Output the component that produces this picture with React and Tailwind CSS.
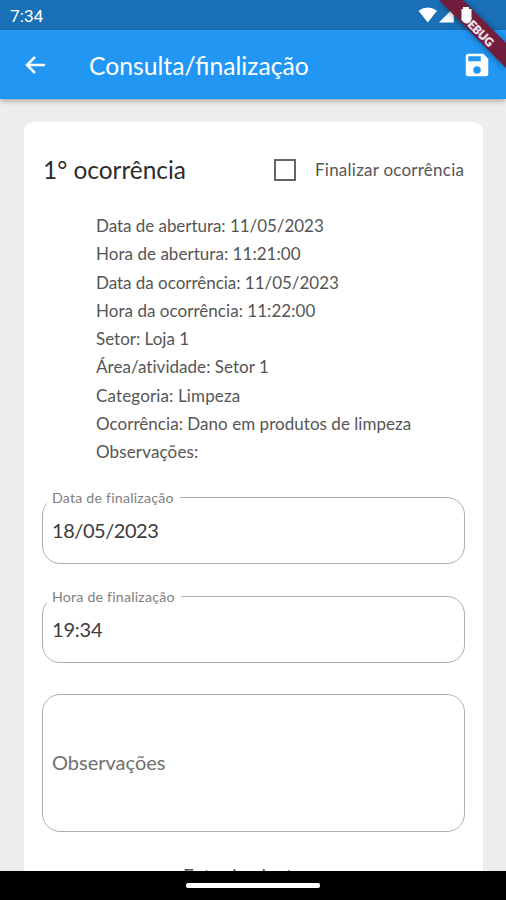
const details = [
  ["Data de abertura: 11/05/2023", "tracking-[-0.04px]"],
  ["Hora de abertura: 11:21:00", "tracking-[0.04px]"],
  ["Data da ocorrência: 11/05/2023", "tracking-[-0.02px]"],
  ["Hora da ocorrência: 11:22:00", "tracking-[0.04px]"],
  ["Setor: Loja 1", "tracking-normal"],
  ["Área/atividade: Setor 1", "tracking-[0.04px]"],
  ["Categoria: Limpeza", "tracking-[0.14px]"],
  ["Ocorrência: Dano em produtos de limpeza", "tracking-[0.04px]"],
  ["Observações:", "tracking-[0.14px]"],
];

function Field({ label, value, valueTracking }) {
  return (
    <fieldset className="ml-[18px] h-[74px] w-[423px] rounded-[18px] border border-[#b0b0b0] pl-[4px]">
      <legend className="h-[16px] pl-[5px] pr-[6px] text-[14.2px] leading-[16px] tracking-[0.2px] whitespace-nowrap text-[#808080]">{label}</legend>
      <div className={`pl-[5px] pt-[10px] text-[20px] leading-[28px] text-[#3c3c3c] ${valueTracking}`}>{value}</div>
    </fieldset>
  );
}

export default function App() {
  return (
    <div className="relative flex h-[900px] w-[506px] flex-col overflow-hidden bg-[#ededed] font-['Lato',sans-serif]">
      <div className="flex h-[30px] shrink-0 items-center justify-between bg-[#1a70b7] pl-[10px] text-white">
        <span className="pt-[2px] font-['Roboto',sans-serif] text-[17.3px] leading-[30px]">7:34</span>
        <svg width="94" height="30" viewBox="412 0 94 30" fill="white">
          <path d="M418.5 10.8Q427.8 4.2 437 10.8L427.8 22.6Z" />
          <path d="M439 22.6H453.8V7.5Z" />
        </svg>
      </div>
      <header className="z-10 flex h-[69px] shrink-0 items-center bg-[#2196f3] px-[22px] text-white shadow-[0_2px_5px_rgba(0,0,0,0.3)]">
        <svg width="26" height="28" viewBox="0 0 24 24" fill="white" stroke="white" strokeWidth="0.4">
          <path d="M21 11H7.1l5.5-5.6L11.2 4 3.2 12l8 8 1.4-1.4L7.1 13H21z" />
        </svg>
        <h1 className="ml-[41px] flex-1 pt-[2px] text-[24.7px] leading-[34px] whitespace-nowrap">Consulta/finalização</h1>
        <svg className="-mr-[8px] shrink-0" width="30" height="30" viewBox="0 0 24 24" fill="white">
          <path fillRule="evenodd" d="M17 3H5a2 2 0 0 0-2 2v14a2 2 0 0 0 2 2h14a2 2 0 0 0 2-2V7zM12 19a3 3 0 1 1 0-6 3 3 0 0 1 0 6zM15 9H5V5h10z" />
        </svg>
      </header>
      <main className="ml-[24px] mt-[23px] h-[749px] w-[459px] shrink-0 overflow-hidden rounded-t-[9px] bg-white">
        <div className="mt-[31px] flex h-[34px] items-center pl-[19px]">
          <h2 className="w-[231px] text-[24.4px] whitespace-nowrap text-[#2c2c2c]">1° ocorrência</h2>
          <div className="size-[22px] shrink-0 border-2 border-[#666]" />
          <span className="ml-[19px] text-[17px] tracking-[0.24px] whitespace-nowrap text-[#555]">Finalizar ocorrência</span>
        </div>
        <div className="mt-[25px] pl-[72px] text-[17px] leading-[28.3px] text-[#555]">
          {details.map(([text, tracking]) => <p key={text} className={`whitespace-nowrap ${tracking}`}>{text}</p>)}
        </div>
        <div className="mt-[23px] flex flex-col gap-[25px]">
          <Field label="Data de finalização" value="18/05/2023" valueTracking="tracking-[-0.45px]" />
          <Field label="Hora de finalização" value="19:34" valueTracking="tracking-[-0.2px]" />
        </div>
        <div className="ml-[18px] mt-[31px] flex h-[138px] w-[423px] items-center rounded-[18px] border border-[#b0b0b0] pb-[2px] pl-[9px] text-[20px] text-[#707070]">Observações</div>
        <div className="mt-[30px] h-[30px] pl-[159px] text-[19px] leading-[28px] whitespace-nowrap text-[#555]">Foto da planta</div>
      </main>
      <footer className="absolute bottom-0 left-0 flex h-[29px] w-full justify-center bg-black pt-[12px]">
        <div className="h-[5px] w-[134px] rounded-[2px] bg-white" />
      </footer>
      <svg className="absolute right-0 top-0 z-20" width="94" height="80" viewBox="412 0 94 80">
        <path d="M439 0H463L506 43V68Z" fill="#711d3d" filter="drop-shadow(0 1px 3px #0006)" />
        <text x="478" y="34.5" transform="rotate(45 478 30)" textAnchor="middle" fill="#f3e5ea" stroke="#f3e5ea" strokeWidth="0.4" className="font-['Lato',sans-serif] text-[11.5px] font-black">DEBUG</text>
        <path d="M463 7H469V9H471.5V19L469.5 22.5H464L461.5 19V9H463Z" fill="white" />
      </svg>
    </div>
  );
}
